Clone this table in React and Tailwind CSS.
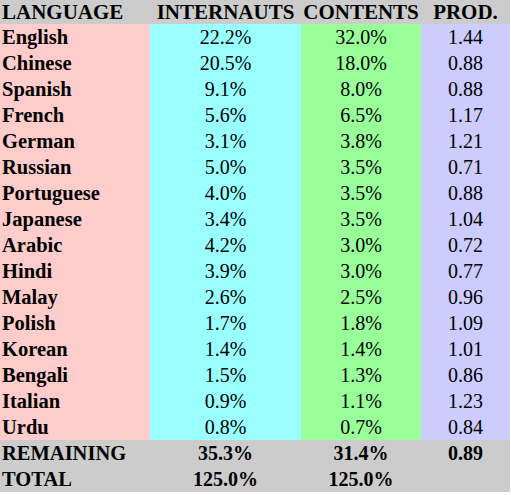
const rows = [
  ['English', '22.2%', '32.0%', '1.44'],
  ['Chinese', '20.5%', '18.0%', '0.88'],
  ['Spanish', '9.1%', '8.0%', '0.88'],
  ['French', '5.6%', '6.5%', '1.17'],
  ['German', '3.1%', '3.8%', '1.21'],
  ['Russian', '5.0%', '3.5%', '0.71'],
  ['Portuguese', '4.0%', '3.5%', '0.88'],
  ['Japanese', '3.4%', '3.5%', '1.04'],
  ['Arabic', '4.2%', '3.0%', '0.72'],
  ['Hindi', '3.9%', '3.0%', '0.77'],
  ['Malay', '2.6%', '2.5%', '0.96'],
  ['Polish', '1.7%', '1.8%', '1.09'],
  ['Korean', '1.4%', '1.4%', '1.01'],
  ['Bengali', '1.5%', '1.3%', '0.86'],
  ['Italian', '0.9%', '1.1%', '1.23'],
  ['Urdu', '0.8%', '0.7%', '0.84'],
];

export default function App() {
  return (
    <div className="bg-white w-[511px] h-[495px] text-black text-[20px] leading-none" style={{ fontFamily: '"Liberation Serif", "Times New Roman", serif' }}>
      <div className="grid grid-cols-[150px_151px_120px_89px]">
        <div className="h-[24px] bg-[#cccccc] font-bold text-[21px] flex items-center pl-[2px]">LANGUAGE</div>
        <div className="h-[24px] bg-[#cccccc] font-bold text-[21px] flex items-center justify-center">INTERNAUTS</div>
        <div className="h-[24px] bg-[#cccccc] font-bold text-[21px] flex items-center justify-center">CONTENTS</div>
        <div className="h-[24px] bg-[#cccccc] font-bold text-[21px] flex items-center justify-center">PROD.</div>

        {rows.map(([lang, net, con, prod]) => (
          <div key={lang} className="contents">
            <div className="h-[26px] bg-[#ffcccc] font-bold text-[20.5px] flex items-center pl-[2px]">{lang}</div>
            <div className="h-[26px] bg-[#99ffff] flex items-center justify-center">{net}</div>
            <div className="h-[26px] bg-[#99ff99] flex items-center justify-center">{con}</div>
            <div className="h-[26px] bg-[#ccccff] flex items-center justify-center">{prod}</div>
          </div>
        ))}

        <div className="h-[26px] bg-[#cccccc] font-bold text-[20.5px] flex items-center pl-[2px]">REMAINING</div>
        <div className="h-[26px] bg-[#cccccc] font-bold flex items-center justify-center">35.3%</div>
        <div className="h-[26px] bg-[#cccccc] font-bold flex items-center justify-center">31.4%</div>
        <div className="h-[26px] bg-[#cccccc] font-bold flex items-center justify-center">0.89</div>

        <div className="h-[26px] bg-[#cccccc] font-bold text-[20.5px] flex items-center pl-[2px]">TOTAL</div>
        <div className="h-[26px] bg-[#cccccc] font-bold flex items-center justify-center">125.0%</div>
        <div className="h-[26px] bg-[#cccccc] font-bold flex items-center justify-center">125.0%</div>
        <div className="h-[26px] bg-[#cccccc]"></div>
      </div>
    </div>
  );
}
